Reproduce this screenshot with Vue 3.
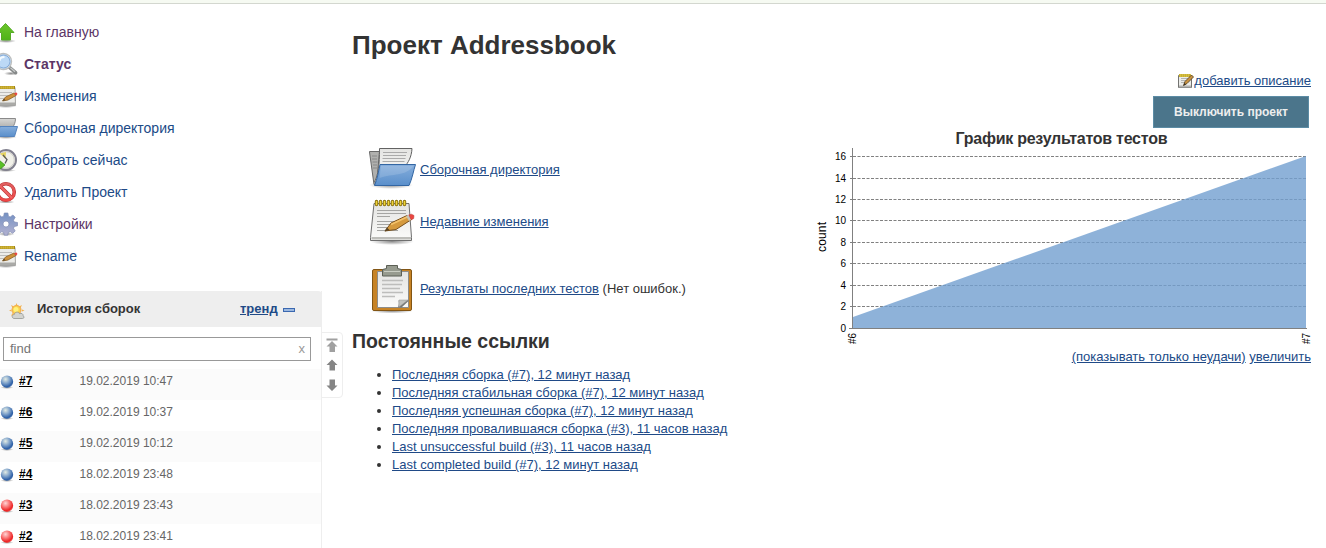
<script setup>
const tasks = [
  { label: 'На главную', icon: 'up', visited: true },
  { label: 'Статус', icon: 'search', visited: true, active: true },
  { label: 'Изменения', icon: 'notepad-small' },
  { label: 'Сборочная директория', icon: 'folder-small' },
  { label: 'Собрать сейчас', icon: 'clock' },
  { label: 'Удалить Проект', icon: 'delete' },
  { label: 'Настройки', icon: 'gear', visited: true },
  { label: 'Rename', icon: 'notepad-small' }
]
const builds = [
  { id: 7, date: '19.02.2019 10:47', status: 'blue' },
  { id: 6, date: '19.02.2019 10:37', status: 'blue' },
  { id: 5, date: '19.02.2019 10:12', status: 'blue' },
  { id: 4, date: '18.02.2019 23:48', status: 'blue' },
  { id: 3, date: '18.02.2019 23:43', status: 'red' },
  { id: 2, date: '18.02.2019 23:41', status: 'red' }
]
const summary = [
  { label: 'Сборочная директория', icon: 'folder' },
  { label: 'Недавние изменения', icon: 'notepad' },
  { label: 'Результаты последних тестов', icon: 'clipboard', note: '(Нет ошибок.)' }
]
const permalinks = [
  'Последняя сборка (#7), 12 минут назад',
  'Последняя стабильная сборка (#7), 12 минут назад',
  'Последняя успешная сборка (#7), 12 минут назад',
  'Последняя провалившаяся сборка (#3), 11 часов назад',
  'Last unsuccessful build (#3), 11 часов назад',
  'Last completed build (#7), 12 минут назад'
]
const ticks = [
  { v: 16, y: 25.5 }, { v: 14, y: 47.5 }, { v: 12, y: 68.5 }, { v: 10, y: 89.5 },
  { v: 8, y: 111.5 }, { v: 6, y: 132.5 }, { v: 4, y: 154.5 }, { v: 2, y: 175.5 }, { v: 0, y: 197.5 }
]
</script>

<template>
  <div class="page">
    <svg class="defs" aria-hidden="true">
      <defs>
        <linearGradient id="gBlue" x1="0" y1="0" x2="0" y2="1"><stop offset="0" stop-color="#86aedc" /><stop offset="1" stop-color="#5a8fcb" /></linearGradient>
        <linearGradient id="gPaper" x1="0" y1="0" x2="0" y2="1"><stop offset="0" stop-color="#e4e4e2" /><stop offset="1" stop-color="#fbfbfa" /></linearGradient>
        <linearGradient id="gGrey" x1="0" y1="0" x2="0" y2="1"><stop offset="0" stop-color="#d8d8d6" /><stop offset="1" stop-color="#8b8b89" /></linearGradient>
        <linearGradient id="gGreen" x1="0" y1="0" x2="0" y2="1"><stop offset="0" stop-color="#6cc52c" /><stop offset="1" stop-color="#4fb317" /></linearGradient>
        <linearGradient id="gGear" x1="0" y1="0" x2="0" y2="1"><stop offset="0" stop-color="#7391c3" /><stop offset="1" stop-color="#b3b1d0" /></linearGradient>
        <linearGradient id="gRed" x1="0" y1="0" x2="0" y2="1"><stop offset="0" stop-color="#e06060" /><stop offset="1" stop-color="#f04646" /></linearGradient>
        <radialGradient id="ballBlue" cx=".38" cy=".3" r=".7"><stop offset="0" stop-color="#e3ece4" /><stop offset=".5" stop-color="#7b9fc9" /><stop offset=".88" stop-color="#2d5fa6" /><stop offset="1" stop-color="#527bb3" /></radialGradient>
        <radialGradient id="ballRed" cx=".38" cy=".3" r=".7"><stop offset="0" stop-color="#ffd5d5" /><stop offset=".45" stop-color="#fa7777" /><stop offset=".85" stop-color="#ec2525" /><stop offset="1" stop-color="#f04b4b" /></radialGradient>
        <radialGradient id="shade"><stop offset="0" stop-color="#000" stop-opacity=".45" /><stop offset="1" stop-color="#000" stop-opacity="0" /></radialGradient>
      </defs>
      <symbol id="folder" viewBox="0 0 48 48">
        <ellipse cx="23" cy="41" rx="22" ry="4" fill="url(#shade)" />
        <path d="M1.500 7.500h10l-3 33H6L1.500 8z" fill="#b0b0ae" stroke="#686868" />
        <path d="M4 12h5M4 15h5M4.500 18h5M5 21h4M5 24h4" stroke="#888" />
        <path d="M11.500 4.500h32.500c-.5 9-4 14-7 18L13 38H6.500c4-8 5-17 5-33.500z" fill="url(#gPaper)" stroke="#626262" />
        <path d="M15 8.500h24M15 11.500h23M14.500 14.500h23M14.500 17.500h22" stroke="#aaa" />
        <path d="M12 20.500h35.500c-2 6-3.500 15-6.500 21H6.500c3-7 4-14 5.500-21z" fill="url(#gBlue)" stroke="#3366a3" />
        <path d="M13 22h32.500c-9 11-20 7-34 12z" fill="#fff" opacity=".15" />
      </symbol>
      <symbol id="folder-small" viewBox="0 0 24 24">
        <ellipse cx="12" cy="21" rx="11" ry="2" fill="url(#shade)" />
        <path d="M1.500 4.500h4V20H3z" fill="#999" stroke="#6a6a6a" />
        <path d="M5.500 2.500H21.500c0 4-1.500 7-3 9L5 20z" fill="url(#gGrey)" stroke="#8a8a8a" />
        <path d="M6 10.500h17.500L20.500 20.500H2.500c2-3 2.500-6 3.500-10z" fill="url(#gBlue)" stroke="#5483bd" />
      </symbol>
      <symbol id="notepad" viewBox="0 0 48 48">
        <ellipse cx="24" cy="43.500" rx="22" ry="3.500" fill="url(#shade)" />
        <path d="M6 5.500h35l2.500 34v3h-41v-3z" fill="url(#gPaper)" stroke="#6f6f6f" />
        <path d="M3.500 39h39.500v2.500h-39.500z" fill="#bdbdb9" />
        <path d="M9 12.500h29M9 15.500h29M9 18.500h13M9 23.500h25M9 26.500h19M9 29.500h17M9 32.500h21" stroke="#a5a5a3" />
        <path d="M8.500 3.500v3M12.500 3.500v3M16.500 3.500v3M20.500 3.500v3M24.500 3.500v3M28.500 3.500v3M32.500 3.500v3M36.500 3.500v3" stroke="#836b0b" stroke-width="3.400" stroke-linecap="round" />
        <path d="M8.500 3.500v3M12.500 3.500v3M16.500 3.500v3M20.500 3.500v3M24.500 3.500v3M28.500 3.500v3M32.500 3.500v3M36.500 3.500v3" stroke="#efd339" stroke-width="1.700" stroke-linecap="round" />
        <path d="M17 33l6-8 16-7.500 4.500 4L28 31.500z" fill="#d59a3e" stroke="#79501c" />
        <path d="M23 26.500l16-7.500" stroke="#f4c36c" stroke-width="1.500" />
        <path d="M40.500 17l3-.8 2.500 1.300-.3 3-2.700 1.500z" fill="#e94540" stroke="#b93632" stroke-width=".5" /><path d="M38 18l2.500-1 2.500 5-2 1z" fill="#c6c4b9" />
        <path d="M16.500 33.500l5-1.500-2.500-2.500z" fill="#594425" />
      </symbol>
      <symbol id="notepad-small" viewBox="0 0 24 24">
        <ellipse cx="12" cy="22" rx="11" ry="2" fill="url(#shade)" />
        <path d="M2.500 3.500H21l.5 18H1.500z" fill="#ecece9" stroke="#a3a3a1" />
        <path d="M2 18.500h19.500V21H2z" fill="#aaaaa7" />
        <path d="M5 8.500h13M5 11.500h9M5 14.500h12" stroke="#bdbdbb" />
        <path d="M4 3.500h17" stroke="#a28717" stroke-width="3" /><path d="M4.500 3.500h16" stroke="#e6cb45" stroke-width="2.500" stroke-dasharray="1.200 .8" />
        <path d="M8.500 17l3-4 8.500-4 2 2.500-8 4.500z" fill="#cd913a" stroke="#8a5f25" stroke-width=".8" />
        <path d="M20 9l2.500-.5 1 1.500-1.500 1.700z" fill="#e94540" /><path d="M8.500 17l3-.7-1.500-1.500z" fill="#594425" />
      </symbol>
      <symbol id="edit" viewBox="0 0 16 16">
        <path d="M.5 2.500h13v12H.5z" fill="#ecece9" stroke="#737371" /><path d="M1 12.500h12v2H1z" fill="#b3b3b0" />
        <path d="M3 5.500h7M3 7.500h6M3 9.500h4" stroke="#b5b5b2" />
        <path d="M1 2.500h12" stroke="#9d8418" stroke-width="3" /><path d="M1.500 2.500h12" stroke="#f0da52" stroke-width="3" stroke-dasharray="1.200 .8" />
        <path d="M5.500 12.500l1.500-4L13.500 2l2 2L9 10.500z" fill="#c9913f" stroke="#5f4a29" stroke-width=".9" /><path d="M5.500 12.500l2.500-1-1.500-1.500z" fill="#332b20" />
      </symbol>
      <symbol id="clipboard" viewBox="0 0 48 48">
        <ellipse cx="24" cy="46" rx="21" ry="2.500" fill="url(#shade)" />
        <rect x="4.500" y="4.500" width="39" height="41" rx="1.500" fill="#c78325" stroke="#825514" />
        <path d="M9.500 6.500h31v36h-31z" fill="url(#gPaper)" stroke="#8d8d8b" />
        <path d="M14 15.500h21M14 19.500h20M14 23.500h18M14 27.500h21M14 31.500h13" stroke="#bdbdbb" stroke-width="1.700" />
        <path d="M30 42.500c1-3 1-5 .5-7l10-.5v1l-7 6.500z" fill="#767876" /><path d="M31 35h9l-9 7z" fill="#c1c2bf" stroke="#929390" stroke-width=".5" />
        <path d="M18.500 3.500v-3h11v3l4 1v6.500h-19V4.500z" fill="#979b8f" stroke="#5b5f55" />
        <path d="M16 6.500h16" stroke="#c9cdc2" />
      </symbol>
      <symbol id="up" viewBox="0 0 24 24"><ellipse cx="12" cy="21" rx="10" ry="2" fill="url(#shade)" /><path d="M11.500 3.500l8.500 9h-3.500v7.500h-9v-7.500H3z" fill="url(#gGreen)" stroke="#55ab26" /></symbol>
      <symbol id="search" viewBox="0 0 24 24"><ellipse cx="17" cy="21.500" rx="7" ry="2" fill="url(#shade)" /><path d="M15 15l6.500 5.700" stroke="#868989" stroke-width="3.600" stroke-linecap="round" /><path d="M16.500 15.700l4.500 4" stroke="#c7caca" stroke-width="1.300" /><circle cx="9.500" cy="9.500" r="8" fill="#d0e4f7" stroke="#bdbfbf" stroke-width="1.400" /><circle cx="9.500" cy="9.500" r="6.500" fill="#bcd9f6" stroke="#84abd8" /><path d="M5.500 9c0-3 2-4 5-4" stroke="#f3faff" stroke-width="2" fill="none" /></symbol>
      <symbol id="clock" viewBox="0 0 24 24"><ellipse cx="12" cy="22.500" rx="10" ry="1.500" fill="url(#shade)" /><circle cx="12" cy="12" r="10" fill="#f1f1e9" stroke="#82818f" stroke-width="2" /><circle cx="12" cy="12" r="8.300" fill="none" stroke="#cbcac8" /><path d="M6 5.500l5.500 5.500.5-7z" fill="#e5d45f" /><path d="M9 7l4 4.500-2 4" fill="none" stroke="#5b5b5b" stroke-width="1.300" /><path d="M1 15h4v-3l6 5-6 5v-3H1z" fill="#59bf26" stroke="#388916" stroke-width=".7" /></symbol>
      <symbol id="delete" viewBox="0 0 24 24"><ellipse cx="12" cy="22" rx="9" ry="1.500" fill="url(#shade)" /><circle cx="12" cy="12" r="8.300" fill="#fff" stroke="#bd3434" stroke-width="3.500" /><path d="M6 6l12 12" stroke="#c23636" stroke-width="3.500" /><circle cx="12" cy="12" r="8.300" fill="none" stroke="url(#gRed)" stroke-width="2.300" /><path d="M6 6l12 12" stroke="#ee6666" stroke-width="2" /></symbol>
      <symbol id="gear" viewBox="0 0 24 24"><ellipse cx="12" cy="22" rx="9" ry="2" fill="url(#shade)" /><path fill-rule="evenodd" d="M10.300 1h3.600l.5 3.200 1.800.8 2.700-2 2.300 2.300-1.700 2.900.8 1.800 3.200.5v3.300l-3.200.7-.8 1.800 1.700 2.600-2.400 2.400-2.600-1.700-1.900.8-.6 2.800h-3.400l-.7-2.800-1.800-.8-2.600 1.700-2.400-2.400 1.700-2.600-.8-1.800L.5 13.800v-3.300l3.200-.5.8-1.800-1.700-2.900L5.200 3l2.600 2 1.900-.8zM12 9a3 3 0 100 6 3 3 0 000-6z" fill="url(#gGear)" stroke="#7f8db5" stroke-width=".7" /></symbol>
    </svg>

    <div class="strip"></div>
    <div class="columns">
      <aside class="side">
        <nav class="tasks">
          <a v-for="t in tasks" :key="t.label" class="task" :class="{ visited: t.visited, active: t.active }">
            <svg class="task-icon"><use :href="'#' + t.icon" /></svg><span>{{ t.label }}</span>
          </a>
        </nav>
        <section class="history">
          <header class="history-head">
            <svg class="weather" viewBox="0 0 16 16">
              <path d="M7.500 0l1 2.500h-2zM2 2l3 1.500-1.500 1.500zM13 2l-1.500 3L10 3.500zM0 7.500l2.500-1v2zM15.500 7.500l-2.500-1v2zM2 13l1.500-3L5 11.500z" fill="#f3b34e" />
              <circle cx="7.500" cy="7" r="4.500" fill="#fbd24e" stroke="#f2a548" /><circle cx="7" cy="6.500" r="2.500" fill="#fff27c" />
              <path d="M5 15.500c-2.500-.5-2.500-3.700.3-4 .5-3 4.500-3 5.200-.8 2-1 4 .3 3.500 2 1.500.5 1.300 2.800-.5 2.800z" fill="#d3d4d0" stroke="#939590" stroke-width=".8" />
            </svg>
            <h3>История сборок</h3>
            <a class="trend">тренд</a><i class="collapse"></i>
          </header>
          <div class="find"><span>find</span><span class="clear">x</span></div>
          <div v-for="b in builds" :key="b.id" class="build">
            <svg class="ball" viewBox="0 0 14 14"><ellipse cx="7" cy="12.500" rx="6.500" ry="1.500" fill="url(#shade)" /><circle cx="7" cy="6.700" r="6.200" :fill="b.status === 'red' ? 'url(#ballRed)' : 'url(#ballBlue)'" /></svg>
            <a class="num">#{{ b.id }}</a><span class="date">{{ b.date }}</span>
          </div>
        </section>
      </aside>
      <div class="pager">
        <svg viewBox="0 0 22 64">
          <path d="M4.500 5.500h11v2h-11zM10 8l5.500 5.500H13V19H7.500v-5.500h-3z" fill="#a0a0a0" />
          <path d="M10 26.500l5.500 5.500H13v5.500H7.500V32h-3z" fill="#858585" />
          <path d="M10 58l5.500-5.500H13V46.500H7.500v6h-3z" fill="#858585" />
        </svg>
      </div>
      <main class="main">
        <h1>Проект Addressbook</h1>
        <div class="content">
          <section class="info">
            <div v-for="s in summary" :key="s.label" class="summary" :class="s.icon">
              <svg class="big"><use :href="'#' + s.icon" /></svg>
              <span><a>{{ s.label }}</a> {{ s.note }}</span>
            </div>
            <h2>Постоянные ссылки</h2>
            <ul>
              <li v-for="p in permalinks" :key="p"><a>{{ p }}</a></li>
            </ul>
          </section>
          <section class="right">
            <div class="describe"><svg class="small"><use href="#edit" /></svg><a>добавить описание</a></div>
            <button class="disable">Выключить проект</button>
            <svg class="chart" viewBox="0 0 500 217">
              <text class="title" x="250.500" y="13" text-anchor="middle" textLength="212">График результатов тестов</text>
              <line v-for="t in ticks.slice(0, 8)" :key="t.v" class="grid" x1="42" x2="495" :y1="t.y" :y2="t.y" />
              <path d="M42 186L495 25V197H42z" fill="#729fcf" fill-opacity=".8" />
              <path d="M41.500 17v181M38 197.500h458" class="axis" />
              <g v-for="t in ticks" :key="'l' + t.v">
                <path :d="`M39 ${t.y}h3`" class="axis" />
                <text class="tick" x="35" :y="t.y + 3.500" text-anchor="end">{{ t.v }}</text>
              </g>
              <text class="count" transform="translate(15 121) rotate(-90)" textLength="30">count</text>
              <text class="tick" transform="translate(45 213) rotate(-90)">#6</text>
              <text class="tick" transform="translate(499 213) rotate(-90)">#7</text>
            </svg>
            <div class="chart-links"><a>(показывать только неудачи)</a> <a>увеличить</a></div>
          </section>
        </div>
      </main>
    </div>
  </div>
</template>

<style>
body { margin: 0; overflow: hidden; background: #fff; }
</style>
<style scoped>
* { box-sizing: border-box; }
.page { width: 1326px; height: 548px; overflow: hidden; font: 13px/18px "Liberation Sans", Arial, sans-serif; color: #333; }
.defs { position: absolute; width: 0; height: 0; }
.strip { height: 4px; background: #f6faf2; border-bottom: 1px solid #d3d7cf; }
.columns { display: flex; height: 544px; }
.side { width: 322px; flex: none; padding-top: 12px; overflow: hidden; }
.tasks { display: flex; flex-direction: column; }
.task { display: flex; align-items: center; height: 32px; margin-left: -6px; gap: 6px; font-size: 14px; color: #204a87; }
.visited { color: #5c3566; }
.active { font-weight: bold; }
.task-icon { width: 24px; height: 24px; flex: none; }
.history { margin-top: 19px; border-right: 1px solid #eee; }
.history-head { display: flex; align-items: center; width: 322px; height: 36px; padding-left: 9px; background: #eee; border-top-right-radius: 4px; }
.weather { width: 16px; height: 16px; margin-top: 3px; }
h3 { width: 203px; margin: 0 0 0 12px; font-size: 13px; }
a { color: #204a87; }
.trend { font-weight: bold; text-decoration: underline; }
.collapse { width: 12px; height: 4px; margin-left: 5px; margin-top: 2px; background: #9bb8e0; border: 1px solid #3b68b0; }
.find { display: flex; justify-content: space-between; align-items: center; width: 308px; height: 24px; margin: 10px 0 8px 3px; padding: 0 5px 1px 6px; border: 1px solid #999; color: #757575; }
.clear { color: #999; padding-top: 1px; }
.build { display: flex; height: 31px; padding-top: 3px; font-size: 12px; color: #666; }
.build:nth-of-type(even) { background: #fbfbfb; }
.ball { width: 14px; height: 14px; margin-top: 3px; }
.num { width: 60.5px; margin-left: 5px; color: #000; font-weight: bold; text-decoration: underline; }
.pager { width: 22px; height: 66px; flex: none; margin: 328px 0 0 -1px; border: 1px solid #eee; border-radius: 0 4px 4px 0; }
.pager svg { display: block; width: 22px; height: 64px; }
.main { width: 959px; flex: none; margin-left: 9px; padding-top: 26px; }
h1 { margin: 0; font-size: 26px; line-height: 30px; }
.content { display: flex; justify-content: space-between; }
.info { padding-top: 84px; }
.info a, .right a { text-decoration: underline; }
.summary { display: flex; align-items: center; gap: 4px; height: 52px; margin-left: 16px; white-space: pre; }
.clipboard { margin-top: 15px; }
.summary .big { width: 48px; height: 48px; }
.folder .big { margin-bottom: 4px; }
h2 { margin: 14px 0 0; font-size: 19.5px; line-height: 24px; }
ul { margin: 13px 0 0; padding-left: 40px; }
.right { display: flex; flex-direction: column; align-items: flex-end; width: 500px; padding-top: 12px; }
.describe { display: flex; align-items: center; height: 18px; }
.small { width: 16px; height: 16px; }
.disable { width: 156px; height: 32px; margin: 6px 2px 3px 0; padding: 0; border: 1px solid #5c8ca5; background: #4b758b; color: #eee; font: bold 12px "Liberation Sans", Arial, sans-serif; }
.chart { display: block; width: 500px; height: 217px; }
.title { font: bold 16px "Liberation Sans", Arial, sans-serif; fill: #333; }
.tick { font: 10px "Liberation Sans", Arial, sans-serif; fill: #000; }
.count { font: 12px "Liberation Sans", Arial, sans-serif; fill: #000; }
.grid { stroke: #808080; stroke-dasharray: 3 1.500; }
.axis { stroke: #808080; fill: none; }
.chart-links { white-space: pre; }
</style>
